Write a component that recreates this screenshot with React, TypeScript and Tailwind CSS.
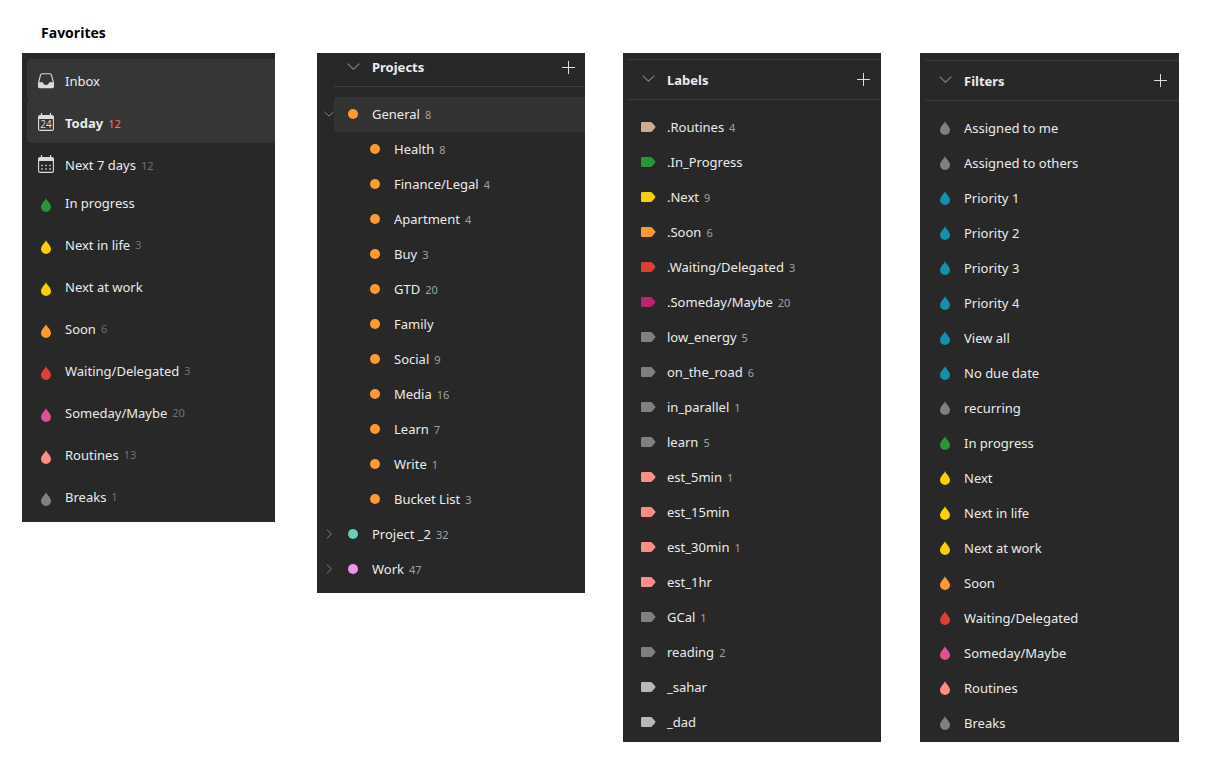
import React from "react";

type Item = { name: string; count?: number; color: string };

const GREY = "#808080";
const ORANGE = "#ff9933";
const YELLOW = "#fad000";
const GREEN = "#299438";
const RED = "#db4035";
const SALMON = "#ff8d85";
const PINK = "#e05194";
const BLUE = "#158fad";
const SILVER = "#b8b8b8";

const favorites: Item[] = [
  { name: "In progress", color: GREEN },
  { name: "Next in life", count: 3, color: YELLOW },
  { name: "Next at work", color: YELLOW },
  { name: "Soon", count: 6, color: ORANGE },
  { name: "Waiting/Delegated", count: 3, color: RED },
  { name: "Someday/Maybe", count: 20, color: PINK },
  { name: "Routines", count: 13, color: SALMON },
  { name: "Breaks", count: 1, color: GREY },
];

const generalChildren: Item[] = [
  { name: "Health", count: 8, color: ORANGE },
  { name: "Finance/Legal", count: 4, color: ORANGE },
  { name: "Apartment", count: 4, color: ORANGE },
  { name: "Buy", count: 3, color: ORANGE },
  { name: "GTD", count: 20, color: ORANGE },
  { name: "Family", color: ORANGE },
  { name: "Social", count: 9, color: ORANGE },
  { name: "Media", count: 16, color: ORANGE },
  { name: "Learn", count: 7, color: ORANGE },
  { name: "Write", count: 1, color: ORANGE },
  { name: "Bucket List", count: 3, color: ORANGE },
];

const labels: Item[] = [
  { name: ".Routines", count: 4, color: "#ccac93" },
  { name: ".In_Progress", color: GREEN },
  { name: ".Next", count: 9, color: YELLOW },
  { name: ".Soon", count: 6, color: ORANGE },
  { name: ".Waiting/Delegated", count: 3, color: RED },
  { name: ".Someday/Maybe", count: 20, color: "#b8256f" },
  { name: "low_energy", count: 5, color: GREY },
  { name: "on_the_road", count: 6, color: GREY },
  { name: "in_parallel", count: 1, color: GREY },
  { name: "learn", count: 5, color: GREY },
  { name: "est_5min", count: 1, color: SALMON },
  { name: "est_15min", color: SALMON },
  { name: "est_30min", count: 1, color: SALMON },
  { name: "est_1hr", color: SALMON },
  { name: "GCal", count: 1, color: GREY },
  { name: "reading", count: 2, color: GREY },
  { name: "_sahar", color: SILVER },
  { name: "_dad", color: SILVER },
];

const filters: Item[] = [
  { name: "Assigned to me", color: GREY },
  { name: "Assigned to others", color: GREY },
  { name: "Priority 1", color: BLUE },
  { name: "Priority 2", color: BLUE },
  { name: "Priority 3", color: BLUE },
  { name: "Priority 4", color: BLUE },
  { name: "View all", color: BLUE },
  { name: "No due date", color: BLUE },
  { name: "recurring", color: GREY },
  { name: "In progress", color: GREEN },
  { name: "Next", color: YELLOW },
  { name: "Next in life", color: YELLOW },
  { name: "Next at work", color: YELLOW },
  { name: "Soon", color: ORANGE },
  { name: "Waiting/Delegated", color: RED },
  { name: "Someday/Maybe", color: PINK },
  { name: "Routines", color: SALMON },
  { name: "Breaks", color: GREY },
];

function Drop({ color }: { color: string }) {
  return (
    <svg width="10" height="14" viewBox="0 0 10 14" fill={color} aria-hidden="true">
      <path d="M5 0C5.4 2.6 10 5.3 10 9.1A5 4.9 0 0 1 0 9.1C0 5.3 4.6 2.6 5 0Z" />
    </svg>
  );
}

function Tag({ color }: { color: string }) {
  return (
    <svg width="16" height="10" viewBox="0 0 16 10" fill={color} aria-hidden="true">
      <path d="M2.5 0H9.8C11 0 11.7.3 12.4 1L15 4C15.6 4.7 15.6 5.3 15 6L12.4 9C11.7 9.7 11 10 9.8 10H2.5C1.5 10 1 9.5 1 8.5V1.5C1 .5 1.5 0 2.5 0Z" />
    </svg>
  );
}

function Dot({ color }: { color: string }) {
  return (
    <svg width="10" height="10" viewBox="0 0 10 10" fill={color} aria-hidden="true">
      <circle cx="5" cy="5" r="5" />
    </svg>
  );
}

function InboxIcon() {
  return (
    <svg width="16" height="16" viewBox="0 0 16 16" aria-hidden="true">
      <path
        d="M.6 9.5 2.5 2.2C2.8 1.2 3.3.7 4.2.7H11.8C12.7.7 13.2 1.2 13.5 2.2L15.4 9.5"
        fill="none"
        stroke="#dcdcdc"
        strokeWidth="1.1"
      />
      <path
        d="M0 9.3H4.9C5.2 11 6.3 12 8 12S10.8 11 11.1 9.3H16V13.6C16 14.6 15.4 15.2 14.4 15.2H1.6C.6 15.2 0 14.6 0 13.6Z"
        fill="#dcdcdc"
      />
    </svg>
  );
}

function CalendarIcon({ children }: { children: React.ReactNode }) {
  return (
    <svg width="16" height="18" viewBox="0 0 16 18" aria-hidden="true">
      <path d="M2 2H14A2 2 0 0 1 16 4V6H0V4A2 2 0 0 1 2 2Z" fill="#dcdcdc" />
      <path d="M3.5 0V3M12.5 0V3" stroke="#dcdcdc" strokeWidth="1.2" />
      <path
        d="M.6 5V15.9C.6 16.8 1.1 17.4 2 17.4H14C14.9 17.4 15.4 16.8 15.4 15.9V5"
        fill="none"
        stroke="#dcdcdc"
        strokeWidth="1.1"
      />
      {children}
    </svg>
  );
}

function Chevron({ open, small }: { open: boolean; small?: boolean }) {
  if (!open) {
    return (
      <svg width="7" height="10" viewBox="0 0 7 10" fill="none" stroke="#808080" aria-hidden="true">
        <path d="M1 .7 5.4 5 1 9.3" />
      </svg>
    );
  }
  return (
    <svg
      width={small ? 10 : 13}
      height={small ? 6 : 7}
      viewBox="0 0 13 7"
      fill="none"
      stroke="#808080"
      strokeWidth={small ? 1.3 : 1.1}
      aria-hidden="true"
    >
      <path d="M.6.7 6.5 6.2 12.4.7" />
    </svg>
  );
}

function Row({
  item,
  icon,
  className = "h-[35px] pb-px",
  countClass = "text-[#a0a0a0]",
}: {
  item: { name: string; count?: number };
  icon: React.ReactNode;
  className?: string;
  countClass?: string;
}) {
  return (
    <a href="#" className={`flex min-w-0 grow items-center ${className}`}>
      <span className="flex w-[38px] shrink-0 justify-center">{icon}</span>
      <span className="whitespace-nowrap">{item.name}</span>
      {item.count !== undefined && (
        <span className={`ml-[5px] pt-px text-[11px] font-normal ${countClass}`}>{item.count}</span>
      )}
    </a>
  );
}

function Header({ title, className }: { title: string; className: string }) {
  return (
    <div className={`flex items-center border-[#3f3f3f] ${className}`}>
      <button type="button" aria-label={`Toggle ${title}`} className="flex w-[38px] shrink-0 justify-center pb-[2px]">
        <Chevron open />
      </button>
      <h2 className="grow font-bold">{title}</h2>
      <button type="button" aria-label={`Add to ${title}`} className="p-[10px]">
        <svg width="13" height="13" viewBox="0 0 13 13" stroke="#dcdcdc" aria-hidden="true">
          <path d="M6.5 0V13M0 6.5H13" />
        </svg>
      </button>
    </div>
  );
}

export default function App() {
  const panel = "bg-[#282828] text-[13px] leading-5 text-[#ebebeb]";
  return (
    <main className="grid min-h-screen grid-cols-[minmax(0,253fr)_42px_minmax(0,268fr)_38px_minmax(0,258fr)_39px_minmax(0,259fr)] items-start bg-white pr-[33px] pl-[22px] font-['Noto_Sans',sans-serif]">
      <section>
        <h1 className="h-[53px] pt-[22px] pl-[19px] font-['Open_Sans',sans-serif] text-sm leading-[22px] font-bold text-black">
          Favorites
        </h1>
        <nav aria-label="Favorites" className={`${panel} pt-[6px] pb-[5px] pl-[5px]`}>
          <Row item={{ name: "Inbox" }} icon={<InboxIcon />} className="h-[42px] rounded-l bg-[#363636] pt-[2px]" />
          <Row
            item={{ name: "Today", count: 12 }}
            className="h-[42px] rounded-l bg-[#363636] pt-[2px] font-bold"
            countClass="text-[#ff7066]"
            icon={
              <span className="pb-[2px]">
                <CalendarIcon>
                  <text x="8" y="15" textAnchor="middle" fontSize="10" fontWeight="400" fill="#dcdcdc" fontFamily="Open Sans">
                    24
                  </text>
                </CalendarIcon>
              </span>
            }
          />
          <Row
            item={{ name: "Next 7 days", count: 12 }}
            className="h-[42px] pt-[2px]"
            countClass="text-[#707070]"
            icon={
              <span className="pb-[2px]">
                <CalendarIcon>
                  <path
                    d="M3.2 10.5H4.8M7.2 10.5H8.8M11.2 10.5H12.8M3.2 14H4.8M7.2 14H8.8M11.2 14H12.8"
                    stroke="#c8c8c8"
                    strokeWidth="1.5"
                  />
                </CalendarIcon>
              </span>
            }
          />
          <div className="-mt-1">
            {favorites.map((f) => (
              <Row
                key={f.name}
                item={f}
                className="h-[42px] pt-px"
                countClass="text-[#707070]"
                icon={
                  <span className="pt-[5px]">
                    <Drop color={f.color} />
                  </span>
                }
              />
            ))}
          </div>
        </nav>
      </section>

      <nav aria-label="Projects" className={`${panel} col-start-3 mt-[53px] pb-[6px]`}>
        <Header title="Projects" className="mb-[10px] ml-[17px] h-[34px] border-b pb-[5px]" />
        <div className="flex items-center">
          <button type="button" aria-label="Collapse General" className="flex w-[17px] shrink-0 justify-end pt-2 pb-[10px]">
            <Chevron open small />
          </button>
          <Row
            item={{ name: "General", count: 8 }}
            icon={<Dot color={ORANGE} />}
            className="h-[35px] rounded-l bg-[#333333] pb-px"
          />
        </div>
        <div className="pl-[39px]">
          {generalChildren.map((p) => (
            <Row key={p.name} item={p} icon={<Dot color={p.color} />} />
          ))}
        </div>
        {[
          { name: "Project _2", count: 32, color: "#6accbc" },
          { name: "Work", count: 47, color: "#eb96eb" },
        ].map((p) => (
          <div key={p.name} className="flex items-center">
            <button type="button" aria-label={`Expand ${p.name}`} className="flex w-[17px] shrink-0 justify-end pt-2 pr-px pb-[10px]">
              <Chevron open={false} />
            </button>
            <Row item={p} icon={<Dot color={p.color} />} />
          </div>
        ))}
      </nav>

      <nav aria-label="Labels" className={`${panel} col-start-5 mt-[53px] pt-[6px] pb-[2px] pl-[6px]`}>
        <Header title="Labels" className="mb-[10px] h-[41px] border-y pr-px" />
        {labels.map((l) => (
          <Row key={l.name} item={l} icon={<Tag color={l.color} />} />
        ))}
      </nav>

      <nav aria-label="Filters" className={`${panel} col-start-7 mt-[53px] pt-[7px] pb-px pl-[6px]`}>
        <Header title="Filters" className="mb-[10px] h-[41px] border-y pr-[2px]" />
        {filters.map((f) => (
          <Row key={f.name} item={f} icon={<Drop color={f.color} />} />
        ))}
      </nav>
    </main>
  );
}
